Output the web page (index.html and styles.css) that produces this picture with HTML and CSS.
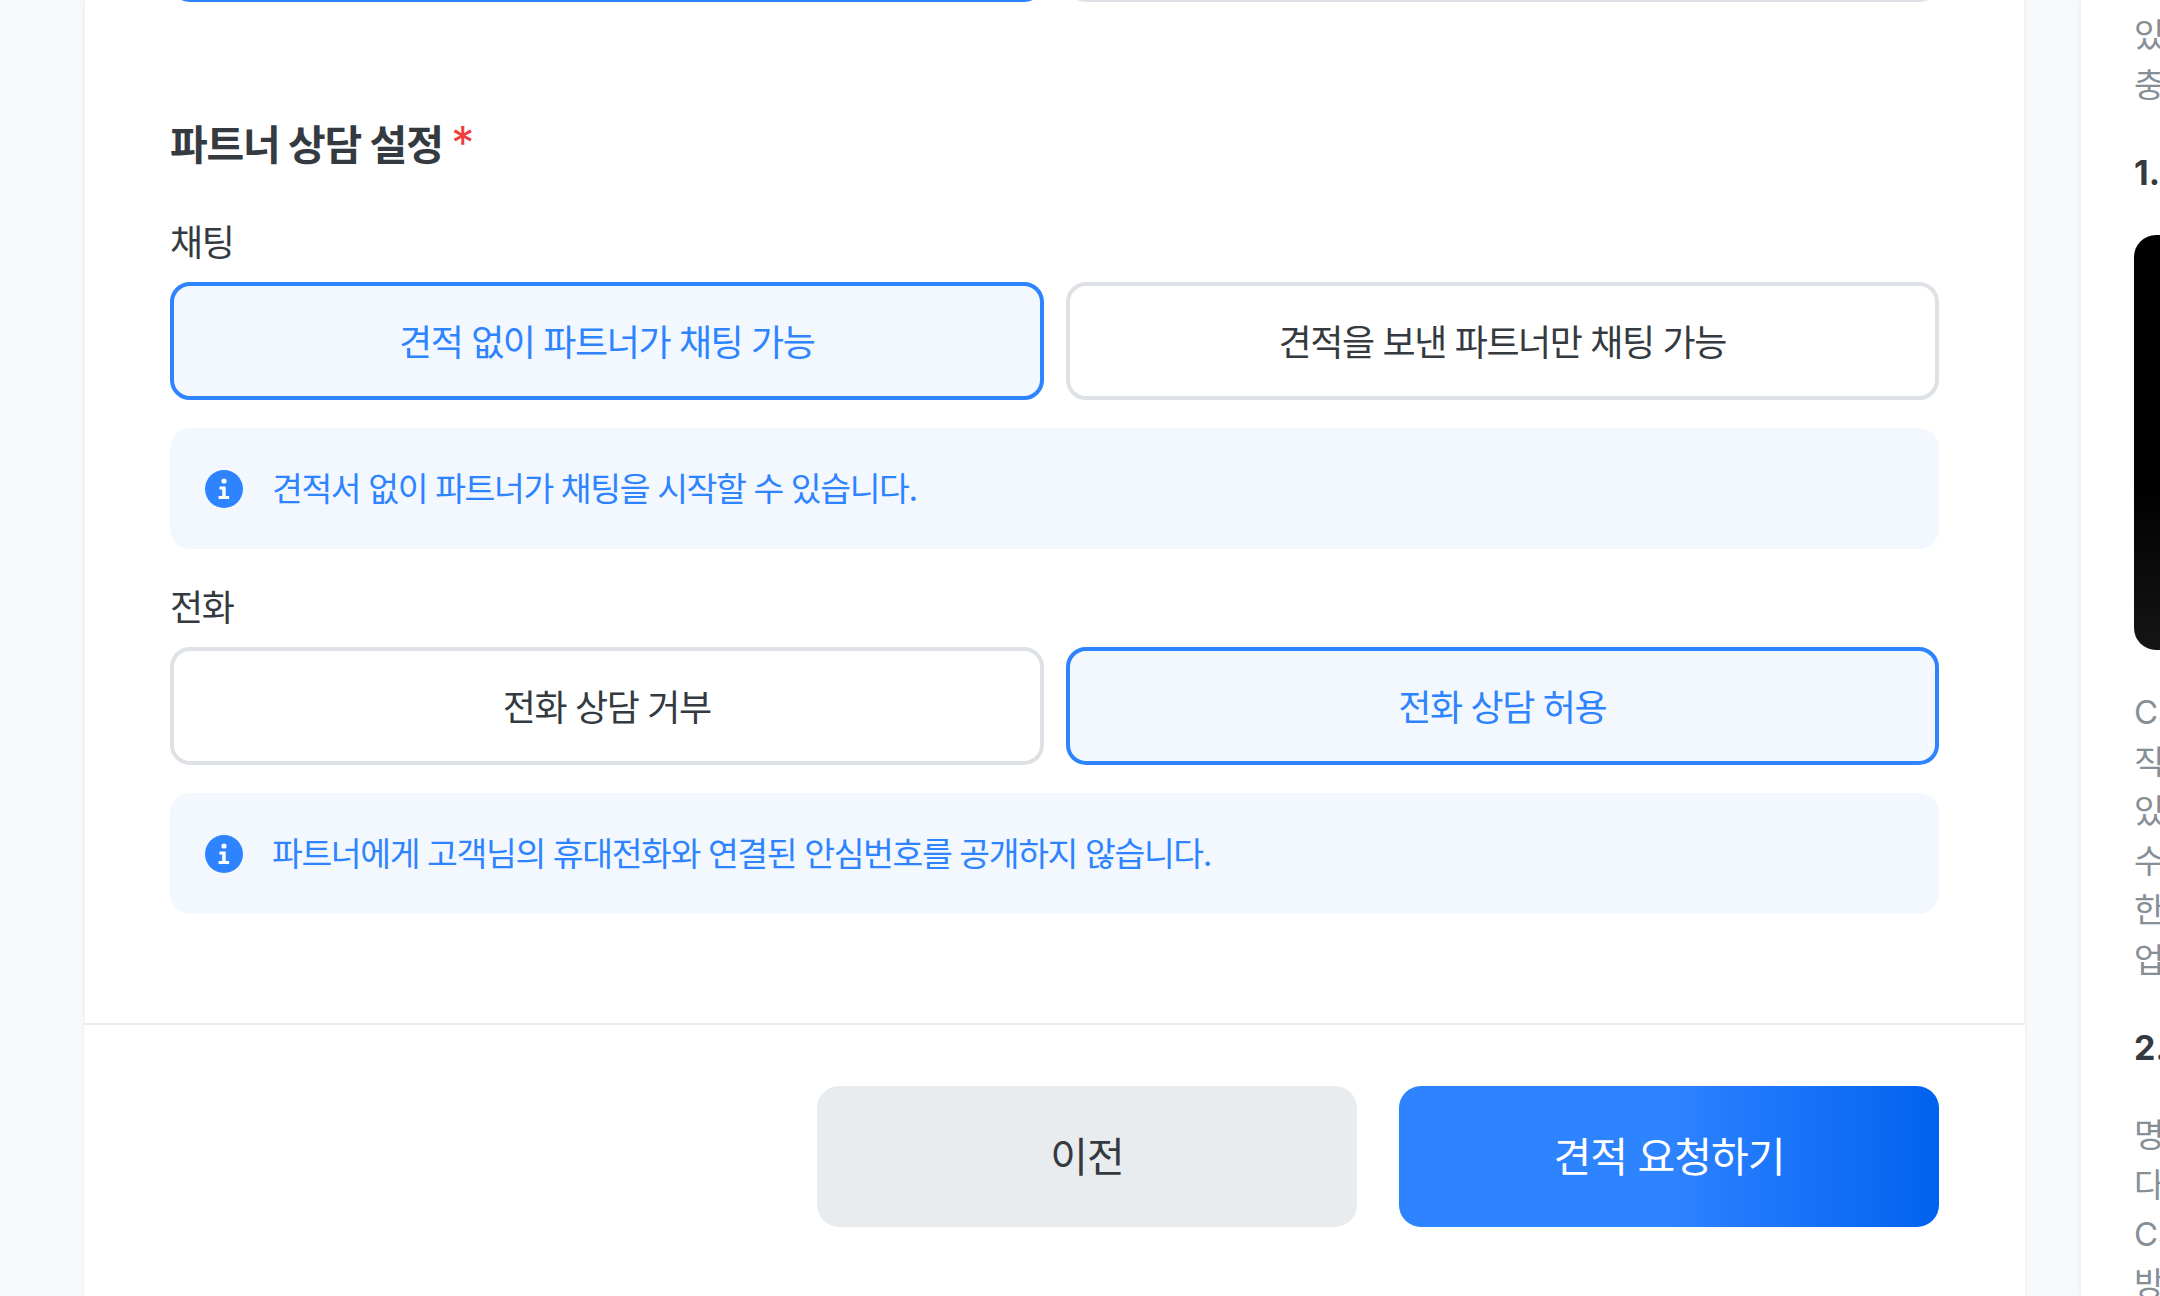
FILE: index.html
```html
<!DOCTYPE html>
<html lang="ko">
<head>
<meta charset="utf-8">
<title>견적 요청</title>
<link rel="stylesheet" href="styles.css">
</head>
<body>
<div class="page">
  <main class="card">
    <div class="sliver">
      <div class="sliver-cell sliver-on"></div>
      <div class="sliver-cell sliver-off"></div>
    </div>
    <section class="form">
      <h2 class="title">파트너 상담 설정 <span class="req">*</span></h2>
      <div class="label">채팅</div>
      <div class="choices">
        <button class="choice on">견적 없이 파트너가 채팅 가능</button>
        <button class="choice">견적을 보낸 파트너만 채팅 가능</button>
      </div>
      <div class="note">
        <svg class="note-icon" viewBox="0 0 38 38"><circle cx="19" cy="19" r="19" fill="#2e83ff"/><circle cx="19" cy="11" r="2.6" fill="#fff"/><path d="M14.5 16.5h6.2v9.6h3.4v3H13.6v-3h3.6v-6.6h-2.7z" fill="#fff"/></svg>
        <span class="note-text">견적서 없이 파트너가 채팅을 시작할 수 있습니다.</span>
      </div>
      <div class="label label-2">전화</div>
      <div class="choices">
        <button class="choice">전화 상담 거부</button>
        <button class="choice on">전화 상담 허용</button>
      </div>
      <div class="note">
        <svg class="note-icon" viewBox="0 0 38 38"><circle cx="19" cy="19" r="19" fill="#2e83ff"/><circle cx="19" cy="11" r="2.6" fill="#fff"/><path d="M14.5 16.5h6.2v9.6h3.4v3H13.6v-3h3.6v-6.6h-2.7z" fill="#fff"/></svg>
        <span class="note-text">파트너에게 고객님의 휴대전화와 연결된 안심번호를 공개하지 않습니다.</span>
      </div>
    </section>
    <footer class="actions">
      <button class="btn btn-prev">이전</button>
      <button class="btn btn-next">견적 요청하기</button>
    </footer>
  </main>
  <aside class="side">
    <p class="side-p">있습니다<br>충분히</p>
    <h3 class="side-h">1. 채팅</h3>
    <div class="side-img"></div>
    <p class="side-p">CS<br>직접<br>있습니다<br>수<br>한<br>업체</p>
    <h3 class="side-h side-h-2">2. 전화</h3>
    <p class="side-p side-p-last">명함<br>다른<br>CS<br>방법</p>
  </aside>
</div>
</body>
</html>
```

FILE: styles.css
```css
* { box-sizing: border-box; }
html, body { margin: 0; padding: 0; height: 1296px; overflow: hidden; background: #f8f9fa; }
body { font-family: "Inter", "Noto Sans CJK KR", sans-serif; color: #343a40; }
button { font-family: inherit; cursor: pointer; }
.page { display: flex; height: 1296px; padding-left: 85px; overflow: hidden; }
.card { width: 1939px; height: 1311px; flex: none; background: #fff; border-radius: 0 0 22px 22px; box-shadow: 0 0 6px rgba(33, 37, 41, .08); display: flex; flex-direction: column; }
.sliver { height: 2px; margin: 0 85px; display: flex; gap: 22px; align-items: flex-end; overflow: hidden; flex: none; }
.sliver-cell { flex: 1 1 0; height: 118px; flex-shrink: 0; border-radius: 20px; border: 4px solid; }
.sliver-on { border-color: #2e83ff; }
.sliver-off { border-color: #dee2e6; }
.form { padding: 119px 85px 0; flex: 1; }
.title { margin: 0; font-size: 41px; line-height: 48px; font-weight: 700; letter-spacing: -1.2px; }
.req { color: #f03e3e; font-size: 46px; font-weight: 400; line-height: 0; letter-spacing: 0; }
.label { margin-top: 50px; font-size: 36px; line-height: 48px; letter-spacing: -1.4px; }
.label-2 { margin-top: 35px; }
.choices { display: flex; gap: 22px; margin-top: 15px; }
.choice { flex: 1 1 0; height: 118px; background: #fff; border: 4px solid #dee2e6; border-radius: 20px; padding: 0 0 2px; font-size: 36px; color: #343a40; letter-spacing: -1.4px; }
.choice.on { background: #f3f8ff; border-color: #2e83ff; color: #2e83ff; }
.note { display: flex; align-items: center; gap: 29px; margin-top: 28px; height: 121px; padding-left: 35px; background: #f3f8ff; border-radius: 20px; font-size: 33.5px; color: #2e83ff; letter-spacing: -1.4px; }
.note-text { padding-bottom: 4px; }
.note-icon { width: 38px; height: 38px; flex: none; }
.actions { height: 288px; flex: none; margin: 0 -1px; border-top: 2px solid #e9ecef; display: flex; justify-content: flex-end; gap: 42px; padding: 61px 86px 0; background: #fff; }
.btn { width: 540px; height: 141px; border: 0; border-radius: 22px; padding: 0 0 6px; font-size: 41px; letter-spacing: -1px; }
.btn-prev { background: #e9ecef; color: #343a40; }
.btn-next { background: linear-gradient(90deg, #2e83ff 0%, #2e83ff 50%, #0062f0 100%); color: #fff; }
.side { width: 79px; margin-left: 57px; flex: none; background: #fff; box-shadow: 0 0 6px rgba(33, 37, 41, .08); padding: 11px 0 0 53px; overflow: hidden; height: 1296px; }
.side-p { margin: 0; width: 600px; font-size: 33px; line-height: 49.5px; color: #868e96; white-space: nowrap; }
.side-h { margin: 39px 0 0; width: 600px; font-size: 34px; line-height: 48px; font-weight: 700; white-space: nowrap; color: #343a40; }
.side-h-2 { margin-top: 39px; }
.side-img { width: 600px; height: 415px; margin-top: 38px; margin-bottom: 38px; border-radius: 22px; background: linear-gradient(180deg, #000 0%, #000 60%, #151515 100%); }
.side-p-last { margin-top: 39px; }
```
